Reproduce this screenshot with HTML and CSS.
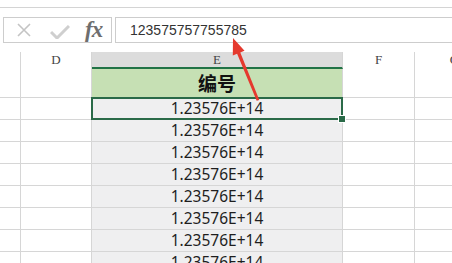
FILE: index.html
```html
<!DOCTYPE html>
<html lang="zh-CN">
<head>
    <meta charset="UTF-8">
    <title>编号</title>
    <link rel="stylesheet" href="styles.css">
</head>
<body>
<div class="top"></div>
<div class="fbar">
    <div class="fbox">
        <svg class="ico" width="16" height="16" viewBox="0 0 16 16">
            <path d="M2 2 L14 14 M14 2 L2 14" stroke="#c4c4c4" stroke-width="1.6" fill="none"/>
        </svg>
        <svg class="ico" width="20" height="14" viewBox="0 0 20 14">
            <path d="M1 7 L7 13 L19 1" stroke="#cfcfcf" stroke-width="3" fill="none"/>
        </svg>
        <span class="fx">fx</span>
    </div>
    <div class="finput">123575757755785</div>
</div>
<div class="sheet">
    <div class="c h"></div>
    <div class="c h">D</div>
    <div class="c h on">E</div>
    <div class="c h">F</div>
    <div class="c h">G</div>

    <div class="c r1"></div>
    <div class="c r1"></div>
    <div class="c r1 e title">编号</div>
    <div class="c r1"></div>
    <div class="c r1"></div>

    <div class="c"></div><div class="c"></div><div class="c e sel">1.23576E+14</div><div class="c"></div><div class="c"></div>
    <div class="c"></div><div class="c"></div><div class="c e">1.23576E+14</div><div class="c"></div><div class="c"></div>
    <div class="c"></div><div class="c"></div><div class="c e">1.23576E+14</div><div class="c"></div><div class="c"></div>
    <div class="c"></div><div class="c"></div><div class="c e">1.23576E+14</div><div class="c"></div><div class="c"></div>
    <div class="c"></div><div class="c"></div><div class="c e">1.23576E+14</div><div class="c"></div><div class="c"></div>
    <div class="c"></div><div class="c"></div><div class="c e">1.23576E+14</div><div class="c"></div><div class="c"></div>
    <div class="c"></div><div class="c"></div><div class="c e">1.23576E+14</div><div class="c"></div><div class="c"></div>
    <div class="c"></div><div class="c"></div><div class="c e">1.23576E+14</div><div class="c"></div><div class="c"></div>
</div>
<svg class="arrow" width="452" height="263" viewBox="0 0 452 263">
    <polygon fill="#e5392e" points="233,38 244.5,50.8 240.3,52.5 259.3,100 256.7,100.8 237.1,53.8 232.8,55.4"/>
</svg>
</body>
</html>
```

FILE: styles.css
```css
* {
    margin: 0;
    padding: 0;
    box-sizing: border-box;
}

body {
    width: 452px;
    height: 263px;
    overflow: hidden;
    background: #fff;
    font-family: "Liberation Sans", "Noto Sans CJK SC", sans-serif;
    position: relative;
}

.top {
    height: 8px;
    border-bottom: 1px solid #d4d4d4;
}

.fbar {
    display: flex;
    height: 26px;
    margin-top: 9px;
}

.fbox {
    display: flex;
    align-items: center;
    width: 109px;
    margin-left: 3px;
    border: 1px solid #cdcdcd;
}

.ico {
    display: block;
}

.fbox .ico:first-child {
    margin-left: 12px;
}

.fbox .ico:nth-child(2) {
    margin-left: 18px;
    margin-top: 3px;
}

.fx {
    margin-left: 15px;
    font-family: "Liberation Serif", serif;
    font-style: italic;
    font-weight: bold;
    font-size: 23px;
    line-height: 24px;
    color: #6e6e6e;
    letter-spacing: -1px;
}

.finput {
    flex: 1;
    margin-left: 3px;
    border: 1px solid #cdcdcd;
    border-right: none;
    padding-left: 14px;
    font-size: 14px;
    line-height: 24px;
    color: #333;
}

.sheet {
    display: grid;
    grid-template-columns: 21px 71px 251px 72px 80px;
    grid-template-rows: 17px 29px repeat(8, 22px);
    margin-top: 9px;
}

.c {
    border-right: 1px solid #d6d6d6;
    border-bottom: 1px solid #d6d6d6;
}

.h {
    font-family: "Liberation Serif", serif;
    font-size: 13px;
    color: #444;
    text-align: center;
    line-height: 16px;
    border-bottom: none;
}

.h.on {
    background: #dcdcdc;
    border-bottom: 2px solid #217346;
    line-height: 15px;
}

.e {
    background: #efeff0;
    text-align: center;
    font-family: "Noto Sans", sans-serif;
    font-size: 15.5px;
    line-height: 21px;
    color: #1e1e1e;
}

.title {
    background: #c6e0b4;
    font-family: "Noto Sans CJK SC", sans-serif;
    font-weight: bold;
    font-size: 19px;
    line-height: 28px;
    color: #111;
}

.sel {
    position: relative;
}

.sel::after {
    content: "";
    position: absolute;
    left: -1px;
    top: -1px;
    right: -1px;
    bottom: -1px;
    border: 2px solid #2a6a48;
}

.sel::before {
    content: "";
    position: absolute;
    right: -4px;
    bottom: -4px;
    width: 6px;
    height: 6px;
    background: #2a6a48;
    border: 1px solid #fff;
    z-index: 2;
}

.arrow {
    position: absolute;
    left: 0;
    top: 0;
}
```
